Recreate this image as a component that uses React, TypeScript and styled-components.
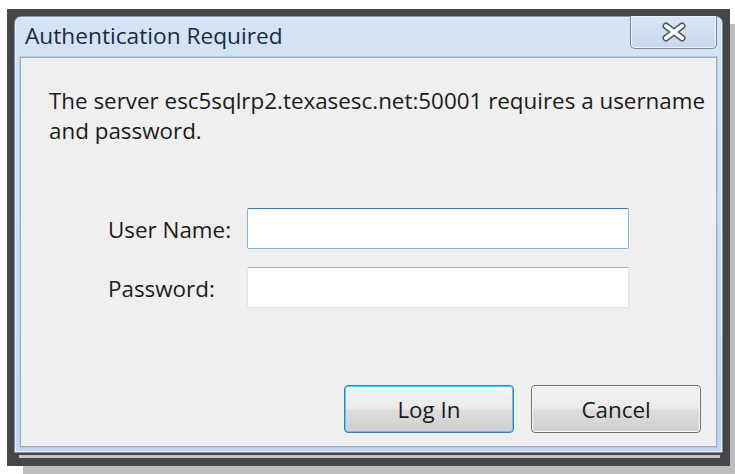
import React from "react";
import styled, { createGlobalStyle } from "styled-components";

const Global = createGlobalStyle`
  html, body {
    margin: 0;
    padding: 0;
    background: #ffffff;
  }
  body {
    font-family: "Open Sans", "Noto Sans", "DejaVu Sans", sans-serif;
  }
`;

const Stage = styled.div`
  padding: 9px 0 0 7px;
  width: 735px;
  height: 474px;
  box-sizing: border-box;
  overflow: hidden;
`;

const Frame = styled.div`
  width: 723px;
  height: 457px;
  box-sizing: border-box;
  background: #464646;
  box-shadow: 16px 15px 0 #bdbdbd;
  padding: 7px 7px 0 7px;
  display: flex;
  flex-direction: column;
`;

const Window = styled.div`
  height: 437px;
  box-sizing: border-box;
  border: 1px solid #7f93ab;
  border-radius: 7px 7px 0 0;
  background: linear-gradient(180deg, #d4e4f6 0%, #c9dcf2 60%, #c3d7ef 100%);
  padding: 0 5px 5px 5px;
  display: flex;
  flex-direction: column;
  box-shadow: inset 0 0 0 1px #e6effa;
`;

const ShadowLine = styled.div`
  height: 3px;
  margin: 2px 3px 0 5px;
  background: #c4c4c4;
`;

const TitleBar = styled.div`
  height: 40px;
  display: flex;
  align-items: flex-start;
  justify-content: space-between;
`;

const Title = styled.div`
  font-size: 22.7px;
  color: #1c2a40;
  padding: 3px 0 0 5px;
`;

const CloseButton = styled.button`
  width: 87px;
  height: 33px;
  margin: -1px 0 0 0;
  border: 1px solid #7a8799;
  border-top: none;
  border-radius: 0 0 5px 5px;
  background: linear-gradient(180deg, #d9e6f5 0%, #cfdff2 50%, #c6d8ee 100%);
  box-shadow: inset 0 0 0 1px #e9f1fb;
  display: flex;
  align-items: center;
  justify-content: center;
  padding: 0;
`;

const Client = styled.div`
  flex: 1;
  border: 1px solid #9aaec6;
  box-shadow: 0 0 0 1px #b6cae2;
  background: #efefef;
  display: flex;
  flex-direction: column;
  padding: 28px 15px 0 28px;
  font-size: 22.4px;
  color: #1b1b1b;
`;

const Message = styled.p`
  margin: 0;
  line-height: 30px;
  white-space: nowrap;
`;

const Form = styled.div`
  display: grid;
  grid-template-columns: 139px 382px;
  row-gap: 18px;
  margin: 62px 0 0 59px;
  align-items: center;
`;

const Label = styled.label`
  font-size: 22.4px;
  padding-top: 2px;
`;

const Field = styled.input<{ $focused?: boolean }>`
  height: 41px;
  box-sizing: border-box;
  background: #ffffff;
  border: 1px solid ${(p) => (p.$focused ? "#7eb4ea" : "#e2e3ea")};
  border-top-color: ${(p) => (p.$focused ? "#3d7bad" : "#abadb3")};
  border-radius: 2px;
  outline: none;
  font: inherit;
  padding: 0 6px;
`;

const Buttons = styled.div`
  margin-top: auto;
  margin-bottom: 13px;
  display: flex;
  justify-content: flex-end;
  gap: 17px;
`;

const Button = styled.button<{ $primary?: boolean }>`
  width: 170px;
  height: 48px;
  border-radius: 4px;
  border: 1px solid ${(p) => (p.$primary ? "#3c7fb1" : "#707070")};
  background: linear-gradient(180deg, #f3f3f3 0%, #ebebeb 48%, #dddddd 52%, #cfcfcf 100%);
  box-shadow: inset 0 0 0 1px ${(p) => (p.$primary ? "#48d2fb" : "#fcfcfc")};
  font-family: "Open Sans", "Noto Sans", sans-serif;
  font-size: 22.4px;
  color: #1b1b1b;
  padding: 0;
`;

function CloseGlyph() {
  return (
    <svg width="28" height="20" viewBox="0 0 28 20">
      <path d="M6 4 L22 16 M22 4 L6 16" stroke="#50565f" strokeWidth="7" strokeLinecap="round" />
      <path d="M6 4 L22 16 M22 4 L6 16" stroke="#ffffff" strokeWidth="4" strokeLinecap="round" />
    </svg>
  );
}

export default function App() {
  return (
    <>
      <Global />
      <Stage>
        <Frame>
          <Window>
            <TitleBar>
              <Title>Authentication Required</Title>
              <CloseButton aria-label="Close">
                <CloseGlyph />
              </CloseButton>
            </TitleBar>
            <Client>
              <Message>
                The server esc5sqlrp2.texasesc.net:50001 requires a username
                <br />
                and password.
              </Message>
              <Form>
                <Label>User Name:</Label>
                <Field $focused />
                <Label>Password:</Label>
                <Field type="password" />
              </Form>
              <Buttons>
                <Button $primary>Log In</Button>
                <Button>Cancel</Button>
              </Buttons>
            </Client>
          </Window>
          <ShadowLine />
        </Frame>
      </Stage>
    </>
  );
}
